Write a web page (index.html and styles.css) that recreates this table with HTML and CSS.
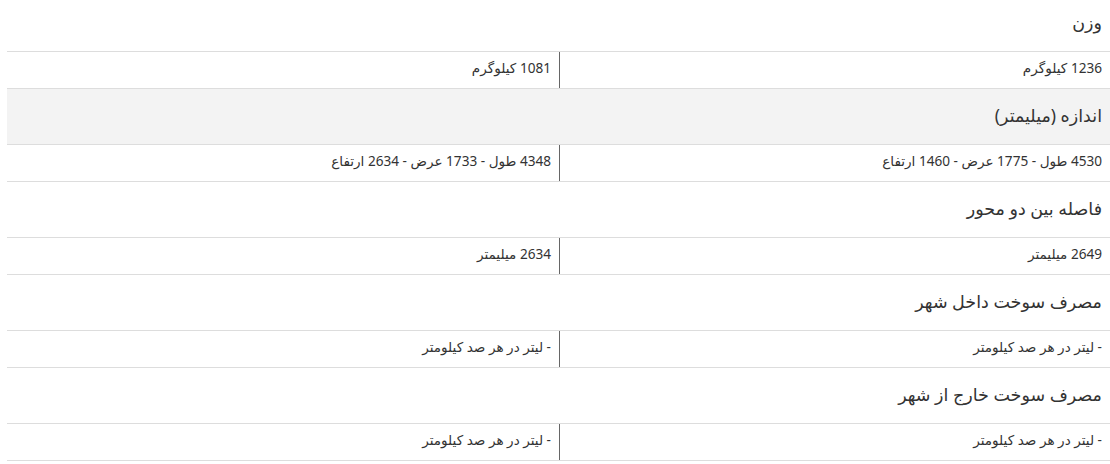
FILE: index.html
```html
<!DOCTYPE html>
<html lang="fa" dir="rtl">
<head>
<meta charset="utf-8">
<link rel="stylesheet" href="styles.css">
</head>
<body>
<div class="specs">
  <div class="title">وزن</div>
  <div class="row"><div class="cell">1236 کیلوگرم</div><div class="cell">1081 کیلوگرم</div></div>
  <div class="title alt">اندازه (میلیمتر)</div>
  <div class="row"><div class="cell">4530 طول - 1775 عرض - 1460 ارتفاع</div><div class="cell">4348 طول - 1733 عرض - 2634 ارتفاع</div></div>
  <div class="title">فاصله بین دو محور</div>
  <div class="row"><div class="cell">2649 میلیمتر</div><div class="cell">2634 میلیمتر</div></div>
  <div class="title">مصرف سوخت داخل شهر</div>
  <div class="row"><div class="cell">- لیتر در هر صد کیلومتر</div><div class="cell">- لیتر در هر صد کیلومتر</div></div>
  <div class="title">مصرف سوخت خارج از شهر</div>
  <div class="row"><div class="cell">- لیتر در هر صد کیلومتر</div><div class="cell">- لیتر در هر صد کیلومتر</div></div>
</div>
</body>
</html>
```

FILE: styles.css
```css
html, body {
  margin: 0;
  padding: 0;
  background: #fff;
}
body {
  padding: 0 0 0 7px;
  font-family: "Noto Sans", "DejaVu Sans", sans-serif;
  color: #333;
}
.specs {
  margin-top: -4px;
  display: flex;
  flex-direction: column;
}
.title {
  height: 55px;
  box-sizing: border-box;
  height: 56px;
  border-bottom: 1px solid #ddd;
  display: flex;
  align-items: center;
  padding: 0 8px 4px;
  font-size: 17.5px;
}
.title.alt {
  background: #f3f3f3;
}
.row {
  display: grid;
  grid-template-columns: 550px 1fr;
  box-sizing: border-box;
  height: 37px;
  border-bottom: 1px solid #ddd;
}
.cell {
  display: flex;
  align-items: center;
  padding: 0 8px 5px;
  font-size: 13.6px;
}
.cell + .cell {
  border-right: 1px solid #666;
}
```
